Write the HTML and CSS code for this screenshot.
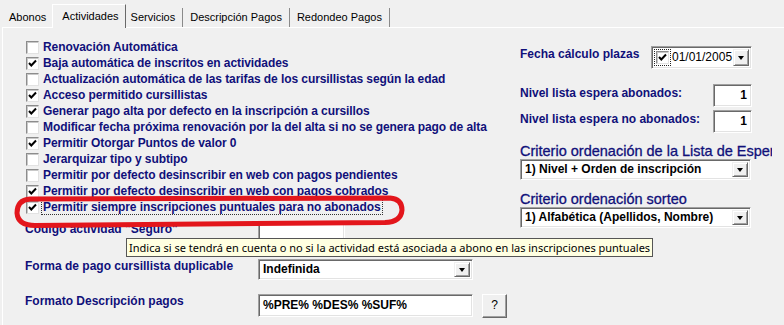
FILE: index.html
```html
<!DOCTYPE html>
<html lang="es">
<head>
<meta charset="utf-8">
<title>Actividades</title>
<link rel="stylesheet" href="styles.css">
</head>
<body>
<div class="window">
  <div class="tabs">
    <div class="tab">Abonos</div>
    <div class="tab active">Actividades</div>
    <div class="tab">Servicios</div>
    <div class="tab">Descripción Pagos</div>
    <div class="tab">Redondeo Pagos</div>
  </div>
  <div class="panel">
    <div class="left">
      <ul class="checks">
        <li class="check"><span class="box"></span><span class="lbl">Renovación Automática</span></li>
        <li class="check"><span class="box"><svg viewBox="0 0 11 11" class="tick"><path d="M2 5 L4.3 7.5 L9 2.5"/></svg></span><span class="lbl">Baja automática de inscritos en actividades</span></li>
        <li class="check"><span class="box"></span><span class="lbl">Actualización automática de las tarifas de los cursillistas según la edad</span></li>
        <li class="check"><span class="box"><svg viewBox="0 0 11 11" class="tick"><path d="M2 5 L4.3 7.5 L9 2.5"/></svg></span><span class="lbl">Acceso permitido cursillistas</span></li>
        <li class="check"><span class="box"><svg viewBox="0 0 11 11" class="tick"><path d="M2 5 L4.3 7.5 L9 2.5"/></svg></span><span class="lbl">Generar pago alta por defecto en la inscripción a cursillos</span></li>
        <li class="check"><span class="box"></span><span class="lbl">Modificar fecha próxima renovación por la del alta si no se genera pago de alta</span></li>
        <li class="check"><span class="box"><svg viewBox="0 0 11 11" class="tick"><path d="M2 5 L4.3 7.5 L9 2.5"/></svg></span><span class="lbl">Permitir Otorgar Puntos de valor 0</span></li>
        <li class="check"><span class="box"></span><span class="lbl">Jerarquizar tipo y subtipo</span></li>
        <li class="check"><span class="box"></span><span class="lbl">Permitir por defecto desinscribir en web con pagos pendientes</span></li>
        <li class="check"><span class="box"><svg viewBox="0 0 11 11" class="tick"><path d="M2 5 L4.3 7.5 L9 2.5"/></svg></span><span class="lbl">Permitir por defecto desinscribir en web con pagos cobrados</span></li>
        <li class="check"><span class="box"><svg viewBox="0 0 11 11" class="tick"><path d="M2 5 L4.3 7.5 L9 2.5"/></svg></span><span class="lbl focus">Permitir siempre inscripciones puntuales para no abonados</span></li>
      </ul>
      <div class="frow r1">
        <span class="flabel">Código actividad "Seguro"</span>
        <span class="input code"></span>
      </div>
      <div class="frow r2">
        <span class="flabel">Forma de pago cursillista duplicable</span>
        <div class="select forma"><span class="val">Indefinida</span><span class="dd"><span class="tri"></span></span></div>
      </div>
      <div class="frow r3">
        <span class="flabel">Formato Descripción pagos</span>
        <span class="input fmt">%PRE% %DES% %SUF%</span>
        <span class="btn">?</span>
      </div>
    </div>
    <div class="right">
      <div class="rrow fecha">
        <span class="rlabel wf">Fecha cálculo plazas</span>
        <div class="date">
          <span class="dfocus"><span class="box"><svg viewBox="0 0 11 11" class="tick"><path d="M2 5 L4.3 7.5 L9 2.5"/></svg></span></span>
          <span class="dval">01/01/2005</span>
          <span class="dd"><span class="tri"></span></span>
        </div>
      </div>
      <div class="rrow nivel n1">
        <span class="rlabel wn">Nivel lista espera abonados:</span>
        <span class="input num">1</span>
      </div>
      <div class="rrow nivel n2">
        <span class="rlabel wn">Nivel lista espera no abonados:</span>
        <span class="input num">1</span>
      </div>
      <div class="clabel c1">Criterio ordenación de la Lista de Espera</div>
      <div class="select wide"><span class="val">1) Nivel + Orden de inscripción</span><span class="dd"><span class="tri"></span></span></div>
      <div class="clabel c2">Criterio ordenación sorteo</div>
      <div class="select wide"><span class="val">1) Alfabética (Apellidos, Nombre)</span><span class="dd"><span class="tri"></span></span></div>
    </div>
  </div>
  <div class="tooltip">Indica si se tendrá en cuenta o no si la actividad está asociada a abono en las inscripciones puntuales</div>
  <svg class="mark" viewBox="0 0 784 325" width="784" height="325">
    <path d="M30 199 L390 198 Q402 199 402 210 Q401 222 385 222.5 L35 225.5 Q18 225.5 17 213 Q17 200 30 199 Z"/>
  </svg>
</div>
</body>
</html>
```
FILE: styles.css
```css
html, body {
  margin: 0;
  padding: 0;
  background: #f0f0f0;
}
.window {
  position: relative;
  width: 784px;
  height: 325px;
  overflow: hidden;
  background: #f0f0f0;
  font-family: "Liberation Sans", Arial, sans-serif;
}
.tabs {
  display: flex;
  align-items: flex-end;
  height: 27px;
  padding-left: 2px;
}
.tab {
  height: 19px;
  line-height: 19px;
  padding: 0 7px;
  font-size: 11px;
  color: #000;
  border-right: 1px solid #8a8a8a;
  white-space: nowrap;
}
.tab.active {
  position: relative;
  z-index: 2;
  height: 20px;
  padding: 3px 6px 0 9px;
  margin: 0 -2px -1px -2px;
  background: #f0f0f0;
  border-top: 1px solid #fff;
  border-left: 1px solid #fff;
  border-right: 1px solid #696969;
  line-height: 17px;
}
.panel {
  display: grid;
  grid-template-columns: 495px 240px;
  margin-left: 2px;
  padding: 11px 0 0 22px;
  border-top: 1px solid #fff;
  border-left: 1px solid #fff;
  height: 400px;
}
.checks {
  list-style: none;
  margin: 0;
  padding: 0 0 0 1px;
}
.check {
  display: flex;
  align-items: center;
  height: 16px;
  gap: 4px;
}
.box {
  box-sizing: border-box;
  width: 13px;
  height: 13px;
  flex: none;
  background: #fff;
  border: 1px solid;
  border-color: #8c8c8c #e2e2e2 #e2e2e2 #8c8c8c;
  box-shadow: inset 1px 1px 0 #c8c8c8;
  display: flex;
  align-items: center;
  justify-content: center;
}
.tick {
  width: 11px;
  height: 11px;
  fill: none;
  stroke: #000;
  stroke-width: 2;
}
.lbl {
  font-size: 12px;
  font-weight: bold;
  color: #10107a;
  white-space: nowrap;
  line-height: 14px;
  letter-spacing: -0.08px;
}
.lbl.focus {
  margin-left: -2px;
  padding: 0 1px;
  border: 1px dotted #333;
}
.frow {
  display: flex;
  align-items: flex-start;
}
.r1 { margin-top: 7px; }
.r2 { margin-top: 16px; }
.r3 { margin-top: 14px; }
.flabel {
  width: 233px;
  flex: none;
  font-size: 12px;
  font-weight: bold;
  color: #10107a;
  line-height: 14px;
  white-space: nowrap;
}
.input {
  box-sizing: border-box;
  background: #fff;
  border: 1px solid;
  border-color: #a0a0a0 #fff #fff #a0a0a0;
  box-shadow: inset 1px 1px 0 #696969, inset -1px -1px 0 #e3e3e3;
  font-size: 12px;
  font-weight: bold;
  color: #000;
  white-space: nowrap;
}
.code {
  width: 87px;
  height: 21px;
}
.fmt {
  width: 215px;
  height: 23px;
  line-height: 21px;
  padding-left: 4px;
}
.btn {
  box-sizing: border-box;
  width: 25px;
  height: 24px;
  margin-left: 9px;
  border: 1px solid;
  border-color: #fff #696969 #696969 #fff;
  box-shadow: inset -1px -1px 0 #a0a0a0;
  background: #f0f0f0;
  font-size: 12px;
  text-align: center;
  line-height: 21px;
  color: #000;
}
.select {
  box-sizing: border-box;
  display: flex;
  align-items: stretch;
  height: 21px;
  background: #fff;
  border: 1px solid;
  border-color: #a0a0a0 #fff #fff #a0a0a0;
  box-shadow: inset 1px 1px 0 #696969, inset -1px -1px 0 #e3e3e3;
  padding: 2px;
}
.forma { width: 215px; }
.wide { width: 231px; }
.val {
  flex: 1;
  font-size: 12px;
  font-weight: bold;
  color: #000;
  line-height: 15px;
  padding-left: 2px;
  white-space: nowrap;
  overflow: hidden;
}
.dd {
  box-sizing: border-box;
  width: 16px;
  flex: none;
  background: #f0f0f0;
  border: 1px solid;
  border-color: #f0f0f0 #696969 #696969 #f0f0f0;
  box-shadow: inset 1px 1px 0 #fff, inset -1px -1px 0 #a0a0a0;
  display: flex;
  align-items: center;
  justify-content: center;
}
.tri {
  width: 0;
  height: 0;
  border-left: 3.5px solid transparent;
  border-right: 3.5px solid transparent;
  border-top: 4px solid #000;
}
.right {
  display: flex;
  flex-direction: column;
  align-items: flex-start;
}
.rrow {
  display: flex;
  align-items: flex-start;
}
.rlabel {
  flex: none;
  font-size: 12px;
  font-weight: bold;
  color: #10107a;
  line-height: 14px;
  white-space: nowrap;
}
.fecha { margin-top: 7px; }
.wf { width: 131px; padding-top: 1px; }
.wn { width: 193px; padding-top: 2px; }
.n1 { margin-top: 15px; }
.n2 { margin-top: 3px; }
.date {
  box-sizing: border-box;
  display: flex;
  align-items: stretch;
  width: 101px;
  height: 23px;
  background: #fff;
  border: 1px solid;
  border-color: #a0a0a0 #fff #fff #a0a0a0;
  box-shadow: inset 1px 1px 0 #696969, inset -1px -1px 0 #e3e3e3;
  padding: 2px;
}
.dfocus {
  box-sizing: border-box;
  width: 17px;
  border: 1px dotted #222;
  display: flex;
  align-items: center;
  justify-content: center;
}
.dval {
  flex: 1;
  font-size: 12px;
  color: #000;
  line-height: 17px;
  padding-left: 1px;
}
.num {
  width: 39px;
  height: 23px;
  line-height: 21px;
  text-align: right;
  padding-right: 4px;
}
.clabel {
  width: 252px;
  overflow: hidden;
  white-space: nowrap;
  font-size: 14.5px;
  line-height: 15px;
  color: #10107a;
  -webkit-text-stroke: 0.3px #10107a;
}
.c1 { margin-top: 11px; }
.c2 { margin-top: 12px; }
.tooltip {
  position: absolute;
  left: 126px;
  top: 238px;
  box-sizing: border-box;
  height: 19px;
  padding: 0 2px;
  background: #ffffe1;
  border: 1px solid #555;
  font-family: "Noto Sans", "Open Sans", sans-serif;
  font-size: 11px;
  line-height: 17px;
  color: #000;
  white-space: nowrap;
  z-index: 5;
}
.mark {
  position: absolute;
  left: 0;
  top: 0;
  z-index: 6;
  pointer-events: none;
}
.mark path {
  fill: none;
  stroke: #e3161c;
  stroke-width: 5;
  stroke-linejoin: round;
}
```
